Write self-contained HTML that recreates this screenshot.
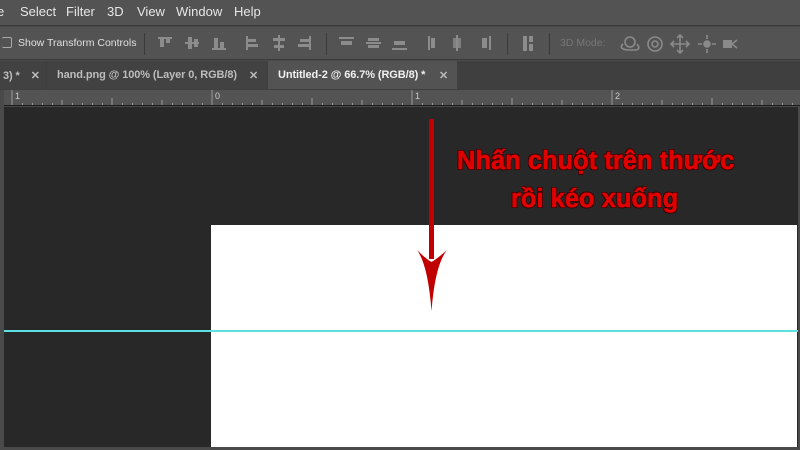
<!DOCTYPE html>
<html><head><meta charset="utf-8"><style>
*{margin:0;padding:0;box-sizing:border-box}
body{width:800px;height:450px;overflow:hidden;background:#4a4a4a;font-family:"Liberation Sans",sans-serif;position:relative}
.abs{position:absolute}
#menu{left:0;top:0;width:800px;height:26px;background:#535353;border-bottom:1px solid #3a3a3a}
#menu span{position:absolute;top:4px;font-size:13px;color:#e6e6e6}
#opts{left:0;top:27px;width:800px;height:33px;background:#535353;border-bottom:1px solid #3a3a3a}
#tabs{left:0;top:61px;width:800px;height:29px;background:#3f3f3f}
.tab{position:absolute;top:0;height:28px;font-size:11px;font-weight:bold;color:#bdbdbd;padding-top:8px;white-space:nowrap;overflow:hidden;letter-spacing:-0.1px}
#ruler{left:4px;top:90px;width:796px;height:16px;background:#535353;border-bottom:1px solid #1a1a1a;overflow:hidden}
#canvas{left:4px;top:107px;width:794px;height:340px;background:#282828}
.ic{position:absolute;background:#8c8c8c}
.sep{position:absolute;top:6px;width:1px;height:22px;background:#3a3a3a}
.t{position:absolute;font-weight:bold;font-size:25.5px;color:#e00000;-webkit-text-stroke:0.6px #e00000;white-space:nowrap;text-shadow:1px 1px 0 #3a0000,-1px -1px 0 #3a0000,1px -1px 0 #3a0000,-1px 1px 0 #3a0000,0 1px 0 #3a0000,0 -1px 0 #3a0000}
</style></head><body>
<div id="menu" class="abs">
<span style="left:-3px">e</span><span style="left:20px">Select</span><span style="left:66px">Filter</span><span style="left:107px">3D</span><span style="left:137px">View</span><span style="left:176px">Window</span><span style="left:234px">Help</span>
</div>
<div id="opts" class="abs">
<div class="abs" style="left:2px;top:10px;width:10px;height:11px;border:1px solid #aaa;border-left:none;border-radius:2px"></div>
<span class="abs" style="left:18px;top:10px;font-size:10.5px;color:#e0e0e0">Show Transform Controls</span>
<div class="sep" style="left:144px"></div>
<div class="ic" style="left:158px;top:10px;width:14px;height:2px"></div><div class="ic" style="left:160px;top:10px;width:4px;height:10px"></div><div class="ic" style="left:166px;top:10px;width:4px;height:6px"></div>
<div class="ic" style="left:185px;top:15px;width:14px;height:2px"></div><div class="ic" style="left:188px;top:10px;width:4px;height:12px"></div><div class="ic" style="left:194px;top:12px;width:4px;height:8px"></div>
<div class="ic" style="left:212px;top:21px;width:14px;height:2px"></div><div class="ic" style="left:214px;top:11px;width:4px;height:10px"></div><div class="ic" style="left:220px;top:15px;width:4px;height:6px"></div>
<div class="ic" style="left:246px;top:9px;width:2px;height:14px"></div><div class="ic" style="left:248px;top:12px;width:8px;height:3px"></div><div class="ic" style="left:248px;top:17px;width:10px;height:3px"></div>
<div class="ic" style="left:278px;top:8px;width:2px;height:16px"></div><div class="ic" style="left:273px;top:11px;width:12px;height:3px"></div><div class="ic" style="left:274px;top:18px;width:10px;height:3px"></div>
<div class="ic" style="left:309px;top:9px;width:2px;height:14px"></div><div class="ic" style="left:300px;top:12px;width:9px;height:3px"></div><div class="ic" style="left:298px;top:17px;width:11px;height:3px"></div>
<div class="sep" style="left:326px"></div>
<div class="ic" style="left:339px;top:10px;width:15px;height:2px"></div><div class="ic" style="left:341px;top:14px;width:11px;height:4px"></div>
<div class="ic" style="left:366px;top:15px;width:15px;height:2px"></div><div class="ic" style="left:368px;top:11px;width:11px;height:3px"></div><div class="ic" style="left:368px;top:18px;width:11px;height:3px"></div>
<div class="ic" style="left:392px;top:21px;width:15px;height:2px"></div><div class="ic" style="left:394px;top:14px;width:11px;height:4px"></div>
<div class="ic" style="left:428px;top:9px;width:2px;height:14px"></div><div class="ic" style="left:431px;top:11px;width:4px;height:10px"></div>
<div class="ic" style="left:456px;top:8px;width:2px;height:16px"></div><div class="ic" style="left:453px;top:11px;width:8px;height:10px;opacity:.8"></div>
<div class="ic" style="left:489px;top:9px;width:2px;height:14px"></div><div class="ic" style="left:482px;top:11px;width:5px;height:10px"></div>
<div class="sep" style="left:507px"></div>
<div class="ic" style="left:523px;top:9px;width:4px;height:15px"></div><div class="ic" style="left:529px;top:9px;width:4px;height:6px"></div><div class="ic" style="left:529px;top:17px;width:4px;height:7px"></div>
<div class="sep" style="left:549px"></div>
<span class="abs" style="left:560px;top:10px;font-size:10.5px;color:#777">3D Mode:</span>
<svg class="abs" style="left:615px;top:5px" width="180" height="24" viewBox="0 0 180 24" fill="none" stroke="#8a8a8a" stroke-width="1.6">
<circle cx="15" cy="10" r="5"/><path d="M8 12 q-5 5 5 6 h8 q5 -1 1 -6"/>
<circle cx="40" cy="12" r="7"/><circle cx="40" cy="12" r="3"/>
<path d="M65 4 v16 M57 12 h16 M62 6 l3-3 3 3 M62 18 l3 3 3-3 M59 9 l-3 3 3 3 M71 9 l3 3-3 3"/>
<circle cx="92" cy="12" r="3" fill="#8a8a8a"/><path d="M92 3 v4 M92 17 v4 M83 12 h4 M97 12 h4"/>
<rect x="108" y="8" width="9" height="8" fill="#8a8a8a" stroke="none"/><path d="M117 12 l5-4 M117 12 l5 4"/>
</svg>
</div>
<div id="tabs" class="abs">
<div class="tab" style="left:0;width:45px;background:#424242;padding-left:3px">3) * <span style="margin-left:8px">✕</span></div>
<div class="tab" style="left:47px;width:220px;background:#424242;padding-left:10px">hand.png @ 100% (Layer 0, RGB/8)<span style="position:absolute;left:202px;top:8px">✕</span></div>
<div class="tab" style="left:268px;width:189px;background:#535353;color:#f0f0f0;padding-left:10px">Untitled-2 @ 66.7% (RGB/8) *<span style="position:absolute;left:171px;top:8px;color:#bbb">✕</span></div>
</div>
<div id="ruler" class="abs">
<svg width="796" height="16" style="position:absolute;left:0;top:0">
<g stroke="#9a9a9a" stroke-width="1">
<path d="M8 0v16 M208 0v16 M408 0v16 M608 0v16"/>
<path d="M58 10v6 M108 8v8 M158 10v6 M258 10v6 M308 8v8 M358 10v6 M458 10v6 M508 8v8 M558 10v6 M658 10v6 M708 8v8 M758 10v6"/>
<path d="M18.5 13v3M28.5 13v3M38.5 13v3M48.5 13v3M68.5 13v3M78.5 13v3M88.5 13v3M98.5 13v3M118.5 13v3M128.5 13v3M138.5 13v3M148.5 13v3M168.5 13v3M178.5 13v3M188.5 13v3M198.5 13v3M218.5 13v3M228.5 13v3M238.5 13v3M248.5 13v3M268.5 13v3M278.5 13v3M288.5 13v3M298.5 13v3M318.5 13v3M328.5 13v3M338.5 13v3M348.5 13v3M368.5 13v3M378.5 13v3M388.5 13v3M398.5 13v3M418.5 13v3M428.5 13v3M438.5 13v3M448.5 13v3M468.5 13v3M478.5 13v3M488.5 13v3M498.5 13v3M518.5 13v3M528.5 13v3M538.5 13v3M548.5 13v3M568.5 13v3M578.5 13v3M588.5 13v3M598.5 13v3M618.5 13v3M628.5 13v3M638.5 13v3M648.5 13v3M668.5 13v3M678.5 13v3M688.5 13v3M698.5 13v3M718.5 13v3M728.5 13v3M738.5 13v3M748.5 13v3M768.5 13v3M778.5 13v3M788.5 13v3"/>
</g>
<g fill="#ccc" font-size="9" font-family="Liberation Sans"><text x="11" y="9">1</text><text x="211" y="9">0</text><text x="411" y="9">1</text><text x="611" y="9">2</text></g>
</svg>
</div>
<div id="canvas" class="abs"></div>
<div class="abs" style="left:211px;top:225px;width:586px;height:222px;background:#fff"></div>
<div class="abs" style="left:4px;top:330px;width:794px;height:2px;background:#5fe0e0"></div>
<svg class="abs" style="left:410px;top:115px" width="45" height="200" viewBox="0 0 45 200">
<rect x="19" y="4" width="5" height="140" fill="#c00000"/>
<path d="M7 135 Q18 150 21.5 196 Q25 150 37 135 Q27 144 21.5 147 Q16 144 7 135Z" fill="#c00000"/>
</svg>
<div class="t" style="left:457px;top:147px">Nhấn chuột trên thước</div>
<div class="t" style="left:511px;top:185px">rồi kéo xuống</div>
</body></html>
